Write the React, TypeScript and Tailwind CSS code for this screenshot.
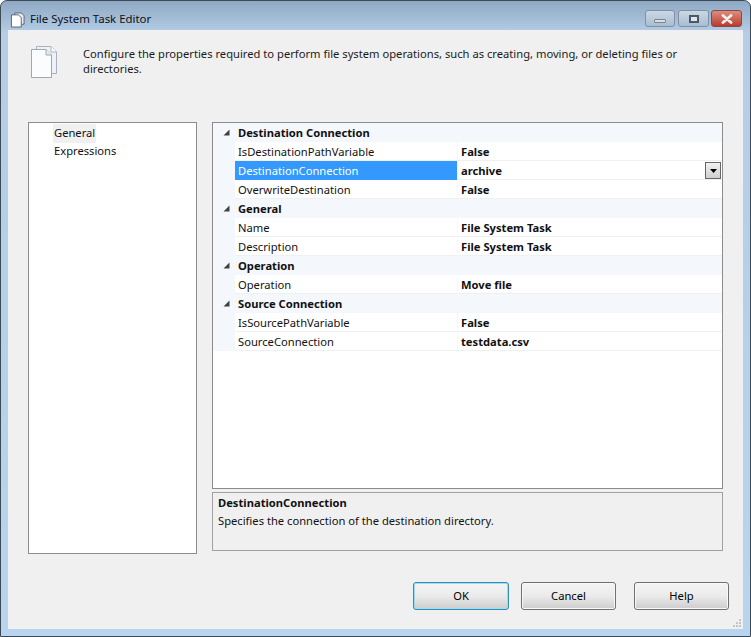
const font = { fontFamily: '"Noto Sans", "Open Sans", sans-serif' };

type Row = { name: string; value: string; selected?: boolean };
type Group = { title: string; rows: Row[] };

const groups: Group[] = [
  {
    title: "Destination Connection",
    rows: [
      { name: "IsDestinationPathVariable", value: "False" },
      { name: "DestinationConnection", value: "archive", selected: true },
      { name: "OverwriteDestination", value: "False" },
    ],
  },
  {
    title: "General",
    rows: [
      { name: "Name", value: "File System Task" },
      { name: "Description", value: "File System Task" },
    ],
  },
  { title: "Operation", rows: [{ name: "Operation", value: "Move file" }] },
  {
    title: "Source Connection",
    rows: [
      { name: "IsSourcePathVariable", value: "False" },
      { name: "SourceConnection", value: "testdata.csv" },
    ],
  },
];

function Pages({ className }: { className: string }) {
  return (
    <svg viewBox="0 0 26 32" className={className}>
      <path d="M5.500 .5H20l5.500 5.500V27.500H5.500Z" fill="#eef1f5" stroke="#a9b1bc" />
      <path d="M20 .5V6h5.500" fill="#fff" stroke="#a9b1bc" />
      <path d="M.5 3.500H15l5.500 5.500V31.500H.500Z" fill="#fbfcfd" stroke="#9ea7b3" />
      <path d="M15 3.500V9h5.500" fill="#e8ebf0" stroke="#9ea7b3" />
    </svg>
  );
}

function Btn({ label, primary, className }: { label: string; primary?: boolean; className: string }) {
  return (
    <button
      className={`${className} h-[28px] rounded-[3px] border text-[11.200px] text-black bg-gradient-to-b from-[#f4f4f4] from-0% via-[#ebebeb] via-50% to-[#cdcdcd] ${
        primary ? "border-[#2f8fb5] shadow-[inset_0_0_0_1px_#9fdcf3]" : "border-[#707070] shadow-[inset_0_0_0_1px_#f8f8f8]"
      }`}
    >
      {label}
    </button>
  );
}

export default function App() {
  return (
    <div
      style={font}
      className="w-[751px] h-[637px] flex flex-col rounded-t-[7px] overflow-hidden border border-[#3c4a55] bg-gradient-to-b from-[#8fa9c4] via-[#b5cde6] via-5% to-[#b9d4ee] px-[7px] pb-[7px] text-[11.200px] text-[#111]"
    >
      <div className="h-[29px] shrink-0 flex items-center relative">
        <svg viewBox="0 0 16 16" className="w-[15px] h-[16px] ml-[2px] mt-[8px]">
          <path d="M5 .5h7l3 3v9H5Z" fill="#e9edf2" stroke="#56606c" />
          <path d="M1.500 2.500H9l3 3v10H1.500Z" fill="#fff" stroke="#56606c" />
        </svg>
        <span className="ml-[5px] mt-[6px] text-[11.400px] text-[#0c1014]">File System Task Editor</span>
        <div className="ml-auto mr-[1px] -mt-[1px] flex self-start gap-[2px] items-start">
          <div className="w-[30px] mr-px h-[17px] mt-[10px] rounded-[3px] border border-[#7f90a2] bg-gradient-to-b from-[#cbd8e5] to-[#a9bdd1] flex items-center justify-center">
            <div className="w-[12px] h-[4px] mt-[5px] rounded-[1px] bg-[#d9dde2] border border-[#7b8590]" />
          </div>
          <div className="w-[31px] h-[17px] mt-[10px] rounded-[3px] border border-[#7f90a2] bg-gradient-to-b from-[#cbd8e5] to-[#a9bdd1] flex items-center justify-center">
            <div className="w-[10px] h-[8px] border-2 border-[#4c5866] bg-[#dfe6ee]" />
          </div>
          <div className="w-[31px] h-[17px] mt-[10px] rounded-[3px] border border-[#8a4a42] bg-gradient-to-b from-[#dc8d80] to-[#b8392c] flex items-center justify-center">
            <svg viewBox="0 0 14 10" className="w-[14px] h-[10px]">
              <path d="M3 1.500l8 7M11 1.500l-8 7" stroke="#f2f0ee" strokeWidth="2.800" strokeLinecap="round" />
            </svg>
          </div>
        </div>
      </div>

      <div className="flex-1 flex flex-col bg-[#f0f0f0] min-h-0 relative">
        <div className="h-[92px] shrink-0 flex pt-[16px] pl-[23px]">
          <Pages className="w-[26px] h-[32px]" />
          <p className="ml-[26px] w-[610px] leading-[15px] text-[#1a1a1a]">
            Configure the properties required to perform file system operations, such as creating, moving, or deleting
            files or directories.
          </p>
        </div>

        <div className="flex pl-[20px] gap-[15px] items-start">
          <div className="w-[169px] h-[432px] border border-[#8c8c8c] bg-white pl-[24px] shrink-0">
            <div className="h-[19px] mt-px leading-[17px] w-[43px] pl-px bg-[#f0f0f0]">General</div>
            <div className="h-[19px] pl-px leading-[16px]">Expressions</div>
          </div>

          <div className="w-[511px] flex flex-col gap-[3px]">
            <div className="h-[367px] border border-[#8c8c8c] bg-white">
              {groups.map((g) => (
                <div key={g.title}>
                  <div className="h-[19px] flex items-center bg-[#f4f7fb]">
                    <svg viewBox="0 0 7 7" className="w-[7px] h-[7px] ml-[10px]">
                      <path d="M6.500 .5V6.500H.5Z" fill="#404040" />
                    </svg>
                    <span className="ml-[8px] mt-[2px] font-bold">{g.title}</span>
                  </div>
                  {g.rows.map((r) => (
                    <div key={r.name} className="h-[19px] flex bg-[#f4f7fb]">
                      <div
                        className={`w-[222px] ml-[22px] pl-[3px] leading-[19px] border-b ${
                          r.selected ? "bg-[#3399ff] border-[#3399ff] text-white" : "bg-white border-[#f0f0f0]"
                        }`}
                      >
                        {r.name}
                      </div>
                      <div className="flex-1 ml-px pl-[3px] bg-white border-b border-[#f0f0f0] font-bold leading-[19px] flex justify-between">
                        {r.value}
                        {r.selected && (
                          <div className="w-[16px] h-[17px] mt-px mr-px border border-[#666] bg-gradient-to-b from-[#f2f2f2] to-[#cfcfcf] flex items-center justify-center">
                            <svg viewBox="0 0 7 4" className="w-[7px] h-[4px]">
                              <path d="M0 0h7L3.500 4Z" fill="#000" />
                            </svg>
                          </div>
                        )}
                      </div>
                    </div>
                  ))}
                </div>
              ))}
            </div>
            <div className="h-[59px] border border-[#a0a0a0] bg-[#f0f0f0] pl-[5px] pt-px leading-[18px]">
              <div className="font-bold">DestinationConnection</div>
              <div>Specifies the connection of the destination directory.</div>
            </div>
          </div>
        </div>

        <div className="mt-auto mb-[19px] flex justify-end mr-[14px]">
          <Btn label="OK" primary className="w-[96px] mr-[12px]" />
          <Btn label="Cancel" className="w-[95px] mr-[18px]" />
          <Btn label="Help" className="w-[95px]" />
        </div>

        <svg viewBox="0 0 9 9" className="absolute right-[2px] bottom-px w-[9px] h-[9px]">
          <path d="M7 0h2v2H7ZM4 3h2v2H4ZM7 3h2v2H7ZM1 6h2v2H1ZM4 6h2v2H4ZM7 6h2v2H7Z" fill="#c4c4c4" />
        </svg>
      </div>
    </div>
  );
}
